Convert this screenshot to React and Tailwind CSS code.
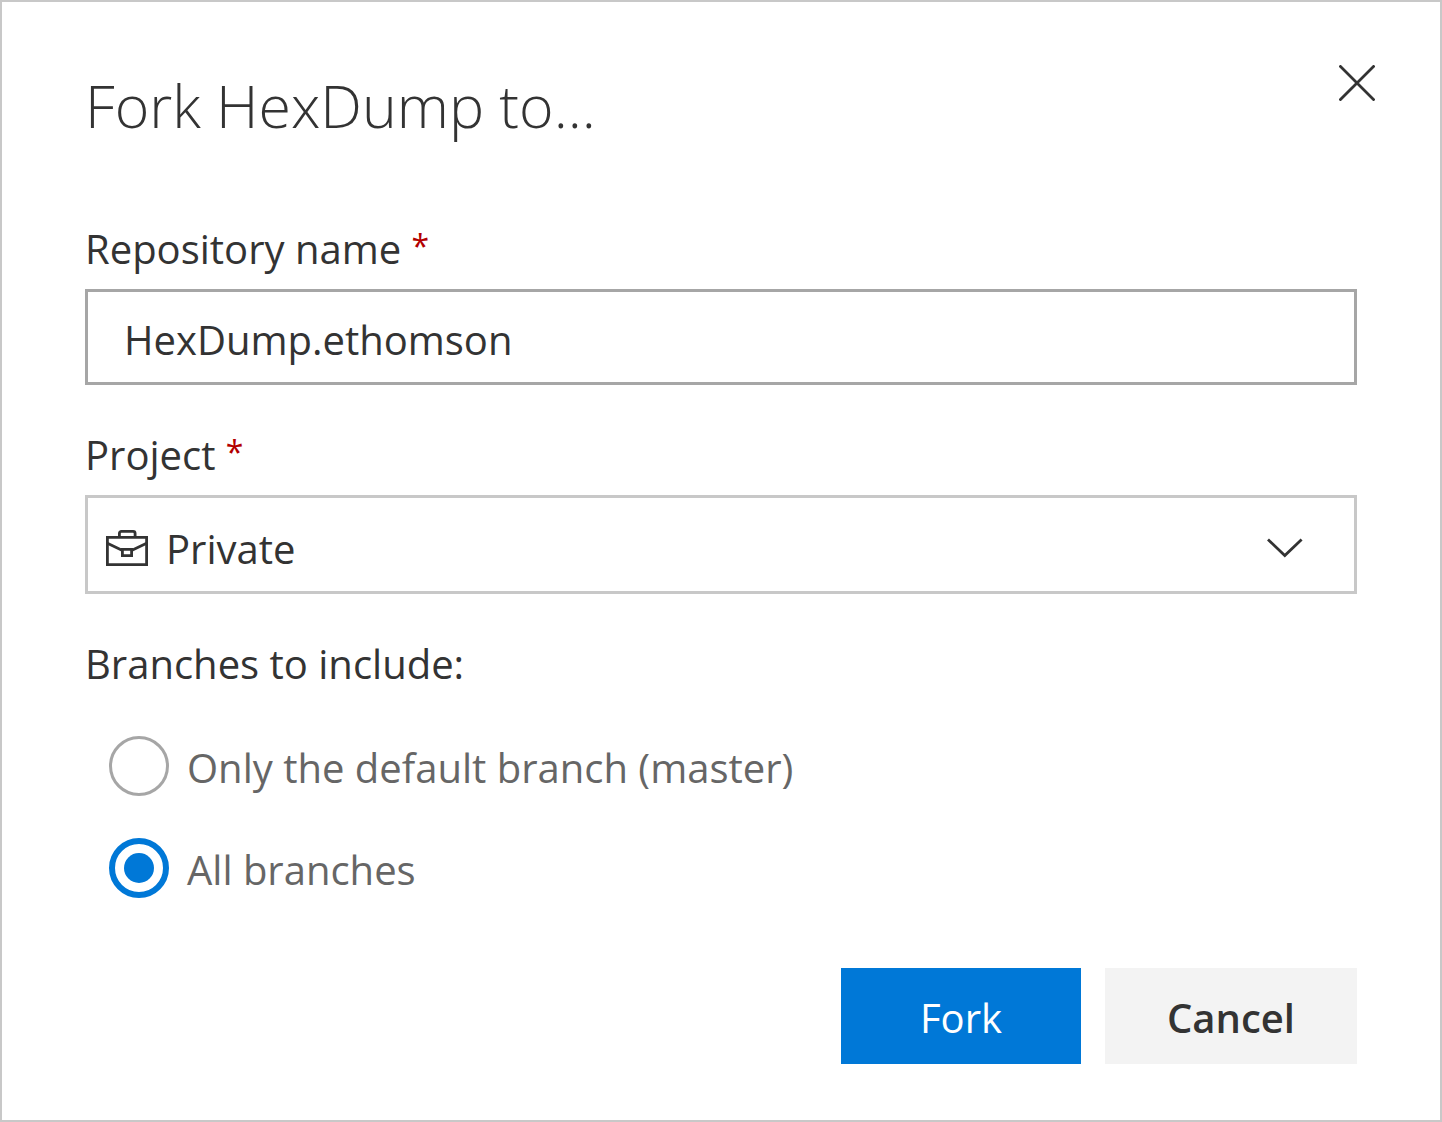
import { useState } from 'react'

const branchOptions = [
  { id: 'default', label: 'Only the default branch (master)' },
  { id: 'all', label: 'All branches' },
]

function CloseIcon() {
  return (
    <svg className="h-9 w-9" viewBox="0 0 36 36" fill="none" stroke="currentColor" strokeWidth="2.8">
      <path d="M0.5 0.5L35.5 35.5M35.5 0.5L0.5 35.5" />
    </svg>
  )
}

function BriefcaseIcon() {
  return (
    <svg className="h-9 w-[42px]" viewBox="0 0 42 36" fill="none" stroke="currentColor" strokeWidth="2.8">
      <path d="M1.4 7.4h39.2v27.2H1.4z" />
      <path d="M13.4 7V3.4a2 2 0 0 1 2-2h11.7a2 2 0 0 1 2 2V7" />
      <path d="M1.4 13.2L16 20.2M40.6 13.2L26 20.2" />
      <path d="M16.4 19.4h9.2v6.2h-9.2z" />
    </svg>
  )
}

function ChevronIcon() {
  return (
    <svg className="h-5 w-9" viewBox="0 0 36 20" fill="none" stroke="currentColor" strokeWidth="2.8">
      <path d="M1 1.5L17.8 17.5L34.6 1.5" />
    </svg>
  )
}

function Label({ htmlFor, children }) {
  return (
    <label htmlFor={htmlFor} className="block">
      {children} <span className="align-[6px] text-[32px] leading-none text-[#b30000]">*</span>
    </label>
  )
}

export default function App() {
  const [name, setName] = useState('HexDump.ethomson')
  const [project, setProject] = useState('Private')
  const [branches, setBranches] = useState('all')

  return (
    <div
      role="dialog"
      aria-labelledby="fork-title"
      className="min-h-screen border-2 border-[#c8c8c8] bg-white px-[83px] pt-[63px] pb-14 font-['Open_Sans','Noto_Sans',sans-serif] text-[40px] leading-[56px] text-[#333333]"
    >
      {/* Header */}
      <header className="flex items-start justify-between">
        <h1 id="fork-title" className="text-[59px] leading-[80px] font-light">Fork HexDump to...</h1>
        <button type="button" aria-label="Close" className="-mr-[18px] cursor-pointer">
          <CloseIcon />
        </button>
      </header>

      <form className="mt-[76px] flex flex-col gap-[42px]" onSubmit={(e) => e.preventDefault()}>
        <div className="flex flex-col gap-3">
          <Label htmlFor="repo-name">Repository name</Label>
          <input
            id="repo-name"
            type="text"
            required
            value={name}
            onChange={(e) => setName(e.target.value)}
            className="h-24 w-full border-3 border-[#a6a6a6] px-9 pt-1 outline-none"
          />
        </div>

        <div className="flex flex-col gap-3">
          <Label htmlFor="project">Project</Label>
          <div className="relative">
            <select
              id="project"
              value={project}
              onChange={(e) => setProject(e.target.value)}
              className="block h-[99px] w-full appearance-none border-3 border-[#c8c8c8] bg-white pt-2 pr-24 pl-[78px] outline-none"
            >
              <option>Private</option>
            </select>
            <div className="pointer-events-none absolute inset-0 flex items-center justify-between pt-1.5 pr-[54px] pl-[21px]">
              <BriefcaseIcon />
              <ChevronIcon />
            </div>
          </div>
        </div>

        {/* Branches */}
        <fieldset>
          <legend>Branches to include:</legend>
          <div className="mt-11 flex flex-col gap-[42px] pl-6">
            {branchOptions.map((option) => (
              <label key={option.id} className="flex items-center gap-[18px] text-[#666666]">
                <input
                  type="radio"
                  name="branches"
                  checked={branches === option.id}
                  onChange={() => setBranches(option.id)}
                  className="h-[60px] w-[60px] shrink-0 appearance-none rounded-full border-3 border-[#a6a6a6] checked:border-6 checked:border-[#0078d7] checked:bg-[#0078d7] checked:bg-clip-content checked:p-[9px]"
                />
                <span className="pt-1">{option.label}</span>
              </label>
            ))}
          </div>
        </fieldset>

        {/* Actions */}
        <div className="mt-7 flex justify-end gap-6">
          <button type="submit" className="h-24 w-60 cursor-pointer bg-[#0078d7] pt-1 text-white">
            Fork
          </button>
          <button type="button" className="h-24 w-[252px] cursor-pointer bg-[#f3f3f3] pt-1 font-semibold">
            Cancel
          </button>
        </div>
      </form>
    </div>
  )
}
